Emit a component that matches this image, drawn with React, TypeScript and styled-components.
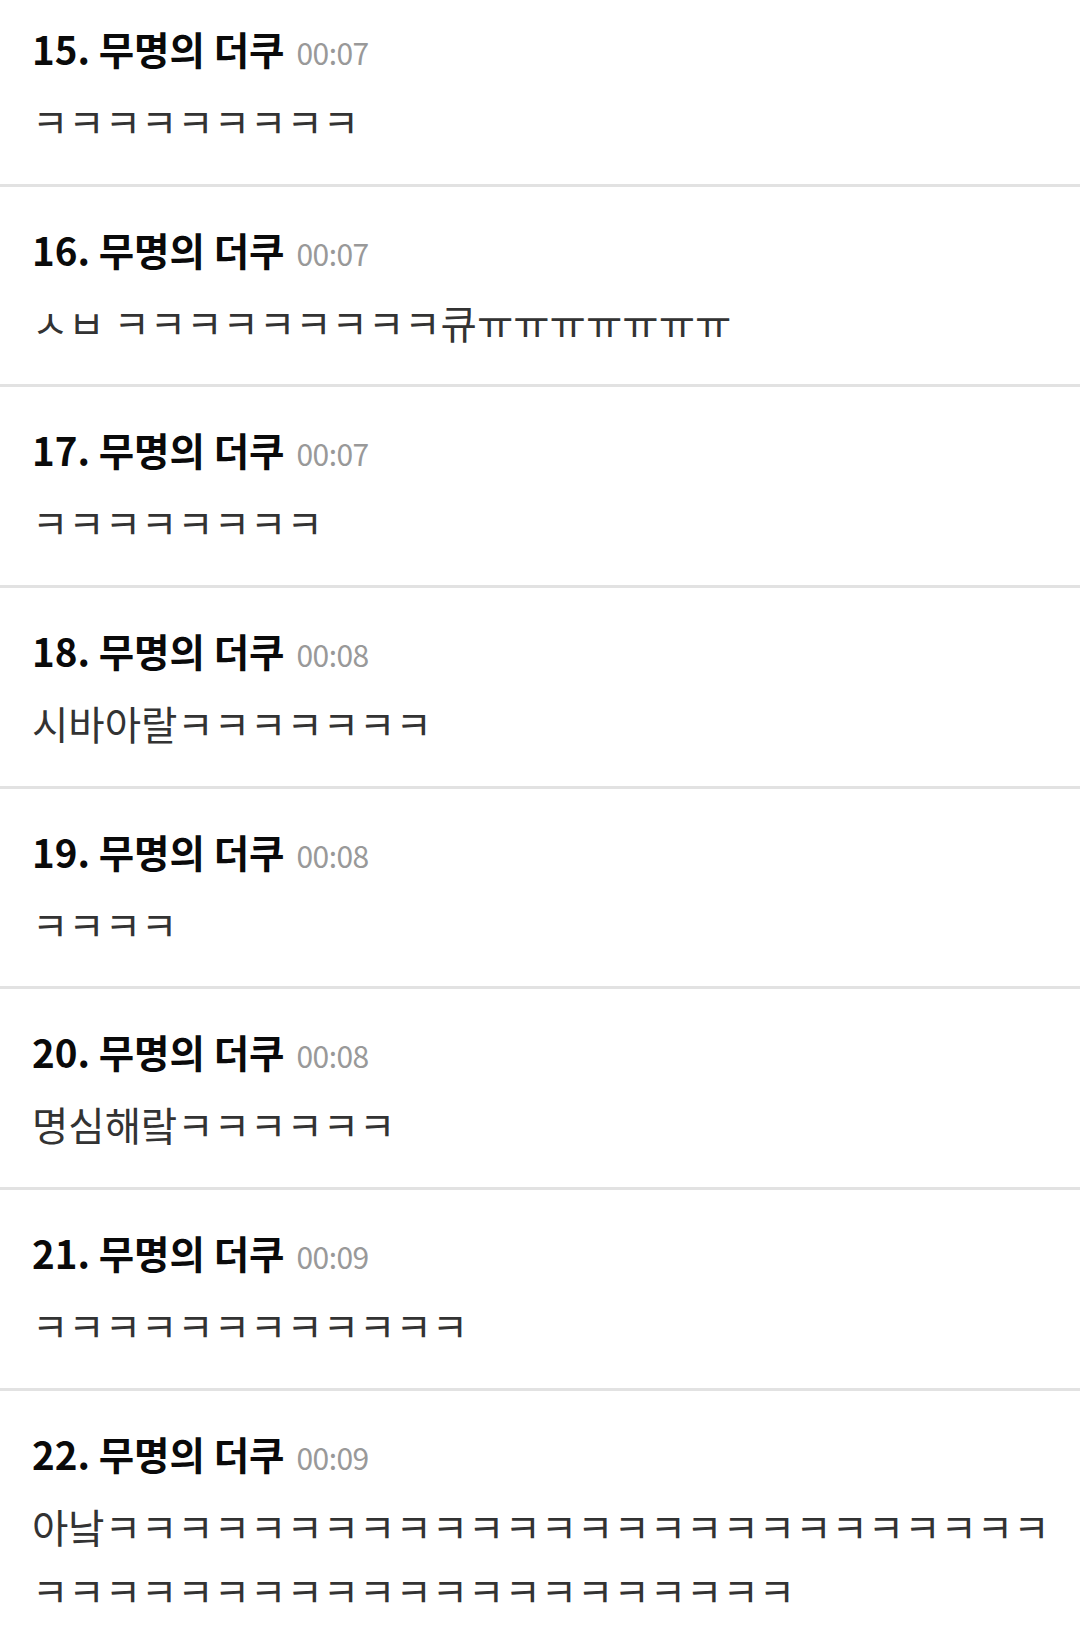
import React from "react";
import styled, { createGlobalStyle } from "styled-components";

type Comment = {
  no: number;
  name: string;
  time: string;
  body: string;
};

const k = (n: number) => "ㅋ".repeat(n);

const comments: Comment[] = [
  { no: 15, name: "무명의 더쿠", time: "00:07", body: k(9) },
  { no: 16, name: "무명의 더쿠", time: "00:07", body: "ㅅㅂ " + k(9) + "큐" + "ㅠ".repeat(7) },
  { no: 17, name: "무명의 더쿠", time: "00:07", body: k(8) },
  { no: 18, name: "무명의 더쿠", time: "00:08", body: "시바아랄" + k(7) },
  { no: 19, name: "무명의 더쿠", time: "00:08", body: k(4) },
  { no: 20, name: "무명의 더쿠", time: "00:08", body: "명심해랔" + k(6) },
  { no: 21, name: "무명의 더쿠", time: "00:09", body: k(12) },
  { no: 22, name: "무명의 더쿠", time: "00:09", body: "아낰" + k(47) },
];

const GlobalStyle = createGlobalStyle`
  html, body {
    margin: 0;
    padding: 0;
    background: #ffffff;
  }
  body {
    font-family: "Noto Sans CJK KR", "Noto Sans", sans-serif;
    overflow: hidden;
  }
`;

export default function App() {
  return (
    <>
      <GlobalStyle />
      <ListStyled>
        {comments.map((c) => (
          <ItemStyled key={c.no}>
            <HeaderStyled>
              <NameStyled>
                {c.no}. {c.name}
              </NameStyled>
              <TimeStyled>{c.time}</TimeStyled>
            </HeaderStyled>
            <BodyStyled>{c.body}</BodyStyled>
          </ItemStyled>
        ))}
      </ListStyled>
    </>
  );
}

const ListStyled = styled.div`
  display: flex;
  flex-direction: column;
  width: 1080px;
  margin-top: -14px;
`;

const ItemStyled = styled.div`
  box-sizing: border-box;
  min-height: 200.7px;
  padding: 30px 24px 30px 32px;
  border-bottom: 3px solid #e2e2e2;
`;

const HeaderStyled = styled.div`
  display: flex;
  align-items: baseline;
  height: 64px;
  line-height: 64px;
`;

const NameStyled = styled.span`
  font-size: 38.5px;
  font-weight: 700;
  color: #0a0a0a;
`;

const TimeStyled = styled.span`
  margin-left: 12px;
  font-size: 30px;
  font-weight: 400;
  color: #999999;
  letter-spacing: -0.6px;
`;

const BodyStyled = styled.div`
  margin-top: 9px;
  font-size: 39.5px;
  line-height: 64px;
  color: #333333;
  word-break: break-all;
`;
